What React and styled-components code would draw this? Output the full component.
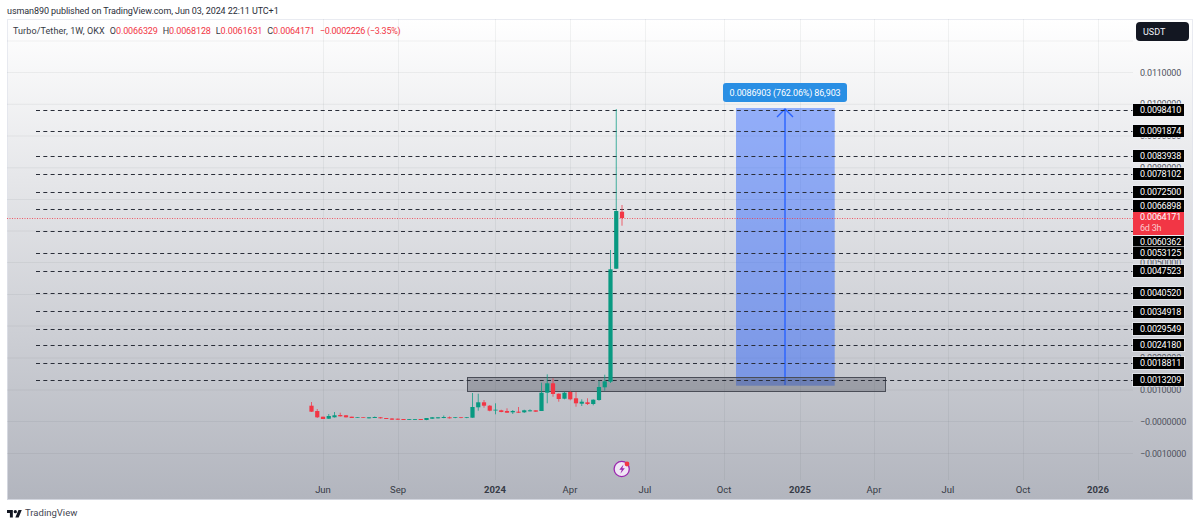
import React from 'react';
import styled, { createGlobalStyle } from 'styled-components';

const GlobalStyle = createGlobalStyle`
  html, body {
    height: 100%;
    margin: 0;
    padding: 0;
    background: #fff;
  }
`;

const FONT = `Roboto, "Liberation Sans", sans-serif`;

const Page = styled.div`
  width: 1200px;
  height: 526px;
  display: flex;
  flex-direction: column;
  font-family: ${FONT};
  color: #131722;
  overflow: hidden;
`;

const Byline = styled.div`
  height: 19px;
  padding: 3px 7px 0;
  box-sizing: border-box;
  display: flex;
  align-items: center;
  font-size: 9px;
  letter-spacing: -0.08px;
  color: #2a2e39;
  white-space: nowrap;
`;

const ChartFrame = styled.div`
  position: relative;
  height: 481px;
  margin: 0 7px;
  box-sizing: border-box;
  background: linear-gradient(180deg, #ffffff 0%, #b2b5be 100%);
  box-shadow: inset 0 0 0 1px rgba(224, 227, 235, 0.7);
`;

const Plot = styled.svg`
  position: absolute;
  inset: 0;
  width: 100%;
  height: 100%;
`;

const Legend = styled.div`
  position: absolute;
  top: 6px;
  left: 6px;
  display: flex;
  gap: 5px;
  font-size: 9px;
  line-height: 12px;
  letter-spacing: -0.12px;
  color: #363a45;
  white-space: nowrap;
`;

const SymbolName = styled.span`
  letter-spacing: 0.1px;
`;

const Ohlc = styled.span`
  color: #f23645;
  letter-spacing: ${p => (p.$tight ? '-0.27px' : 'inherit')};

  b {
    font-weight: 400;
    color: #363a45;
  }
`;

const CurrencyBadge = styled.div`
  position: absolute;
  top: 3px;
  right: 4px;
  width: 53px;
  height: 19px;
  box-sizing: border-box;
  padding-left: 7px;
  display: flex;
  align-items: center;
  background: #131722;
  border-radius: 4px;
  color: #f0f3fa;
  font-size: 9px;
`;

const AxisPrice = styled.div`
  position: absolute;
  left: 1126px;
  top: ${p => p.$y - 19}px;
  transform: translateY(-50%);
  padding-left: 7px;
  font-size: 9px;
  line-height: 12px;
  letter-spacing: -0.2px;
  color: #50535e;
  white-space: nowrap;
`;

const PriceTag = styled.div`
  position: absolute;
  left: 1126px;
  top: ${p => p.$y - 19}px;
  transform: translateY(-50%);
  width: 51px;
  height: 12px;
  padding-left: 7px;
  box-sizing: border-box;
  background: #000;
  box-shadow: 0 0 0 1px rgba(240, 243, 250, 0.55);
  color: #fff;
  font-size: 9px;
  line-height: 12px;
  letter-spacing: -0.2px;
  white-space: nowrap;
`;

const LastPriceTag = styled.div`
  position: absolute;
  left: 1126px;
  top: 193px;
  width: 51px;
  height: 23px;
  padding-left: 7px;
  box-sizing: border-box;
  background: #f23645;
  color: #fff;
  font-size: 9px;
  line-height: 11px;
  letter-spacing: -0.2px;
  white-space: nowrap;

  span {
    display: block;
    color: #fccbcd;
  }
`;

const MeasureBubble = styled.div`
  position: absolute;
  left: 716px;
  top: 64px;
  width: 124px;
  height: 19px;
  display: flex;
  align-items: center;
  justify-content: center;
  background: #2a8fe4;
  border-radius: 3px;
  color: #fff;
  font-size: 9px;
  letter-spacing: -0.15px;
  white-space: nowrap;
`;

const TimeLabel = styled.div`
  position: absolute;
  top: 465px;
  left: ${p => p.$x - 7}px;
  transform: translateX(-50%);
  font-size: 9.5px;
  line-height: 12px;
  font-weight: ${p => (p.$year ? 700 : 400)};
  color: #363a45;
`;

const Footer = styled.div`
  flex: 1;
  padding: 6px 7px 0;
  display: flex;
  align-items: flex-start;
  gap: 3px;
  font-size: 9.5px;
  line-height: 14px;
  color: #434651;
`;

const LogoMark = styled.svg`
  width: 15px;
  height: 7.5px;
  margin-top: 4px;
`;

const RED = '#f23645';
const GREEN = '#089981';

const PLOT_RIGHT = 1133;

// body top, body bottom, wick top, wick bottom, colour
const candles = [
  [405.7, 411.7, 402, 412, 'r'],
  [411, 417.3, 409, 418, 'r'],
  [416.7, 419, 416.7, 419, 'r'],
  [416, 418.7, 414, 419, 'g'],
  [415.3, 417.3, 412, 417.5, 'g'],
  [415, 416.3, 412.7, 416.5, 'r'],
  [415.3, 417.3, 415, 417.5, 'r'],
  [416.7, 418, 416.7, 418, 'r'],
  [417.3, 418, 417.3, 418, 'g'],
  [417.3, 418, 417.3, 418, 'r'],
  [417.3, 418.3, 417, 418.5, 'g'],
  [417, 418, 416.5, 418, 'g'],
  [417.3, 418.3, 417, 418.5, 'r'],
  [418, 419, 418, 419, 'r'],
  [418.5, 419.7, 418, 420, 'r'],
  [418.7, 419.7, 418.5, 420, 'r'],
  [419, 420, 419, 420, 'r'],
  [419.2, 420, 419, 420, 'g'],
  [419.2, 420, 419, 420, 'g'],
  [419, 420, 419, 420, 'r'],
  [418, 420, 418, 420.2, 'g'],
  [417.3, 418.7, 417, 419, 'g'],
  [417.3, 418.3, 417, 418.5, 'g'],
  [417, 418, 415.5, 418.2, 'g'],
  [417.3, 418.3, 416.5, 418.5, 'r'],
  [417.3, 418, 417, 418.2, 'g'],
  [417.3, 418, 417, 418.2, 'r'],
  [417.3, 418, 417, 418.2, 'g'],
  [407, 417.7, 393, 417.7, 'g'],
  [402.3, 407.3, 393.7, 410.7, 'g'],
  [402.3, 405.7, 400, 407.7, 'r'],
  [405.7, 410.7, 405, 411.3, 'r'],
  [409.7, 410.5, 403.3, 414.3, 'g'],
  [410.3, 412, 409.7, 412.3, 'r'],
  [411, 412.7, 408.3, 413, 'r'],
  [411, 412.3, 410, 414, 'g'],
  [411.7, 412.7, 407, 413, 'r'],
  [410.3, 412.3, 409.7, 413, 'g'],
  [410.3, 411.3, 409.3, 411.5, 'g'],
  [410.3, 411.7, 410.3, 412, 'r'],
  [392.7, 411, 382.7, 411, 'g'],
  [383.3, 392.7, 374.3, 403.3, 'g'],
  [383.3, 394, 378.3, 396.7, 'r'],
  [393.7, 399, 393.3, 401.7, 'r'],
  [392.7, 398.7, 391.7, 399.3, 'g'],
  [392, 399.3, 390.7, 400.3, 'r'],
  [398.3, 403.3, 392, 406.7, 'r'],
  [401.7, 403.7, 399.3, 406, 'g'],
  [402.3, 404, 398.3, 405, 'r'],
  [399.7, 404, 399.3, 405.3, 'g'],
  [387, 400, 380.7, 400.7, 'g'],
  [381.3, 387.3, 374.7, 390.7, 'g'],
  [269.3, 381.7, 250, 383, 'g'],
  [211, 268.7, 109, 269, 'g'],
  [211.7, 218, 205, 225.7, 'r'],
];

const levels = [
  { y: 110, tag: 110, label: '0.0098410' },
  { y: 131, tag: 130.5, label: '0.0091874' },
  { y: 156, tag: 155.7, label: '0.0083938' },
  { y: 174, tag: 173.7, label: '0.0078102' },
  { y: 192, tag: 192, label: '0.0072500' },
  { y: 209, tag: 206, label: '0.0066898' },
  { y: 231, tag: 241.7, label: '0.0060362' },
  { y: 253, tag: 253.3, label: '0.0053125' },
  { y: 271, tag: 270.7, label: '0.0047523' },
  { y: 293, tag: 293.3, label: '0.0040520' },
  { y: 311, tag: 311.7, label: '0.0034918' },
  { y: 329, tag: 328.7, label: '0.0029549' },
  { y: 345, tag: 345.3, label: '0.0024180' },
  { y: 363, tag: 362.7, label: '0.0018811' },
  { y: 380, tag: 380.3, label: '0.0013209' },
];

const axisPrices = [
  { y: 72.5, label: '0.0110000' },
  { y: 104.3, label: '0.0100000' },
  { y: 136, label: '0.0090000' },
  { y: 167.8, label: '0.0080000' },
  { y: 262.5, label: '0.0050000' },
  { y: 358, label: '0.0020000' },
  { y: 390, label: '0.0010000' },
  { y: 421.5, label: '−0.0000000' },
  { y: 453.5, label: '−0.0010000' },
];

const times = [
  { x: 323, label: 'Jun' },
  { x: 398, label: 'Sep' },
  { x: 495, label: '2024', year: true },
  { x: 570, label: 'Apr' },
  { x: 645, label: 'Jul' },
  { x: 724, label: 'Oct' },
  { x: 800, label: '2025', year: true },
  { x: 874, label: 'Apr' },
  { x: 948, label: 'Jul' },
  { x: 1023, label: 'Oct' },
  { x: 1098, label: '2026', year: true },
];

const gridY = [41, 72.5, 104.3, 136, 167.8, 199.5, 231, 262.5, 294.5, 326, 358, 390, 421.5, 453.5];

const Candle = ({ i, data }) => {
  const [top, bottom, wickTop, wickBottom, dir] = data;
  const x = 311.5 + i * 5.75;
  const color = dir === 'r' ? RED : GREEN;
  return (
    <g fill={color}>
      <rect x={x - 0.5} y={wickTop} width="1" height={wickBottom - wickTop} opacity="0.75" />
      <rect x={x - 2.1} y={top} width="4.2" height={bottom - top} />
    </g>
  );
};

const BoltBadge = () => (
  <g>
    <circle cx="621.7" cy="469" r="7.6" fill="#f0e6f5" stroke="#9c27b0" strokeWidth="1.3" />
    <path d="M623.5 464.5l-4.2 5.2h2.5l-1.4 4 4.4-5.4h-2.5z" fill="#9c27b0" />
    <circle cx="627" cy="464" r="2.4" fill={RED} />
  </g>
);

const App = () => (
  <>
    <GlobalStyle />
    <Page>
      <Byline>usman890 published on TradingView.com, Jun 03, 2024 22:11 UTC+1</Byline>
      <ChartFrame>
        <Plot viewBox="7 19 1186 481">
          {times.map(t => (
            <line key={t.x} x1={t.x + 0.5} x2={t.x + 0.5} y1="19" y2="480" stroke="#2a2e39" strokeOpacity="0.06" />
          ))}
          {gridY.map(y => (
            <line key={y} x1="7" x2={PLOT_RIGHT} y1={y} y2={y} stroke="#2a2e39" strokeOpacity="0.06" />
          ))}

          {/* long position box */}
          <rect x="736" y="108" width="98.7" height="277.7" fill="#2962ff" fillOpacity="0.47" />
          <path d="M785 385V109M777 117l8-8 8 8" fill="none" stroke="#2962ff" strokeWidth="1.4" />

          {/* support zone */}
          <rect x="467.5" y="377.5" width="418" height="14" fill="#50535e" fillOpacity="0.35" stroke="#4a4d57" strokeWidth="1" />

          {levels.map(l => (
            <line key={l.label} x1="36" x2={PLOT_RIGHT} y1={l.y + 0.5} y2={l.y + 0.5} stroke="#2a2e39" strokeDasharray="4 3.3" />
          ))}
          <line x1="7" x2={PLOT_RIGHT} y1="218.5" y2="218.5" stroke={RED} strokeOpacity="0.8" strokeDasharray="1 1.5" />

          {candles.map((c, i) => (
            <Candle key={i} i={i} data={c} />
          ))}
          <BoltBadge />
        </Plot>

        <Legend>
          <SymbolName>Turbo/Tether, 1W, OKX</SymbolName>
          <Ohlc><b>O</b>0.0066329</Ohlc>
          <Ohlc><b>H</b>0.0068128</Ohlc>
          <Ohlc><b>L</b>0.0061631</Ohlc>
          <Ohlc><b>C</b>0.0064171</Ohlc>
          <Ohlc $tight>−0.0002226 (−3.35%)</Ohlc>
        </Legend>
        <CurrencyBadge>USDT</CurrencyBadge>

        {axisPrices.map(p => (
          <AxisPrice key={p.label} $y={p.y}>{p.label}</AxisPrice>
        ))}
        {levels.map(l => (
          <PriceTag key={l.label} $y={l.tag}>{l.label}</PriceTag>
        ))}
        <LastPriceTag>
          0.0064171
          <span>6d 3h</span>
        </LastPriceTag>

        <MeasureBubble>0.0086903 (762.06%) 86,903</MeasureBubble>

        {times.map(t => (
          <TimeLabel key={t.x} $x={t.x} $year={t.year}>{t.label}</TimeLabel>
        ))}
      </ChartFrame>
      <Footer>
        <LogoMark viewBox="0 4 36 18">
          <path d="M14 22H7V11H0V4h14v18zM28 22h-8l7.5-18h8L28 22z" fill="#131722" />
          <circle cx="20" cy="8" r="4" fill="#131722" />
        </LogoMark>
        TradingView
      </Footer>
    </Page>
  </>
);

export default App;
